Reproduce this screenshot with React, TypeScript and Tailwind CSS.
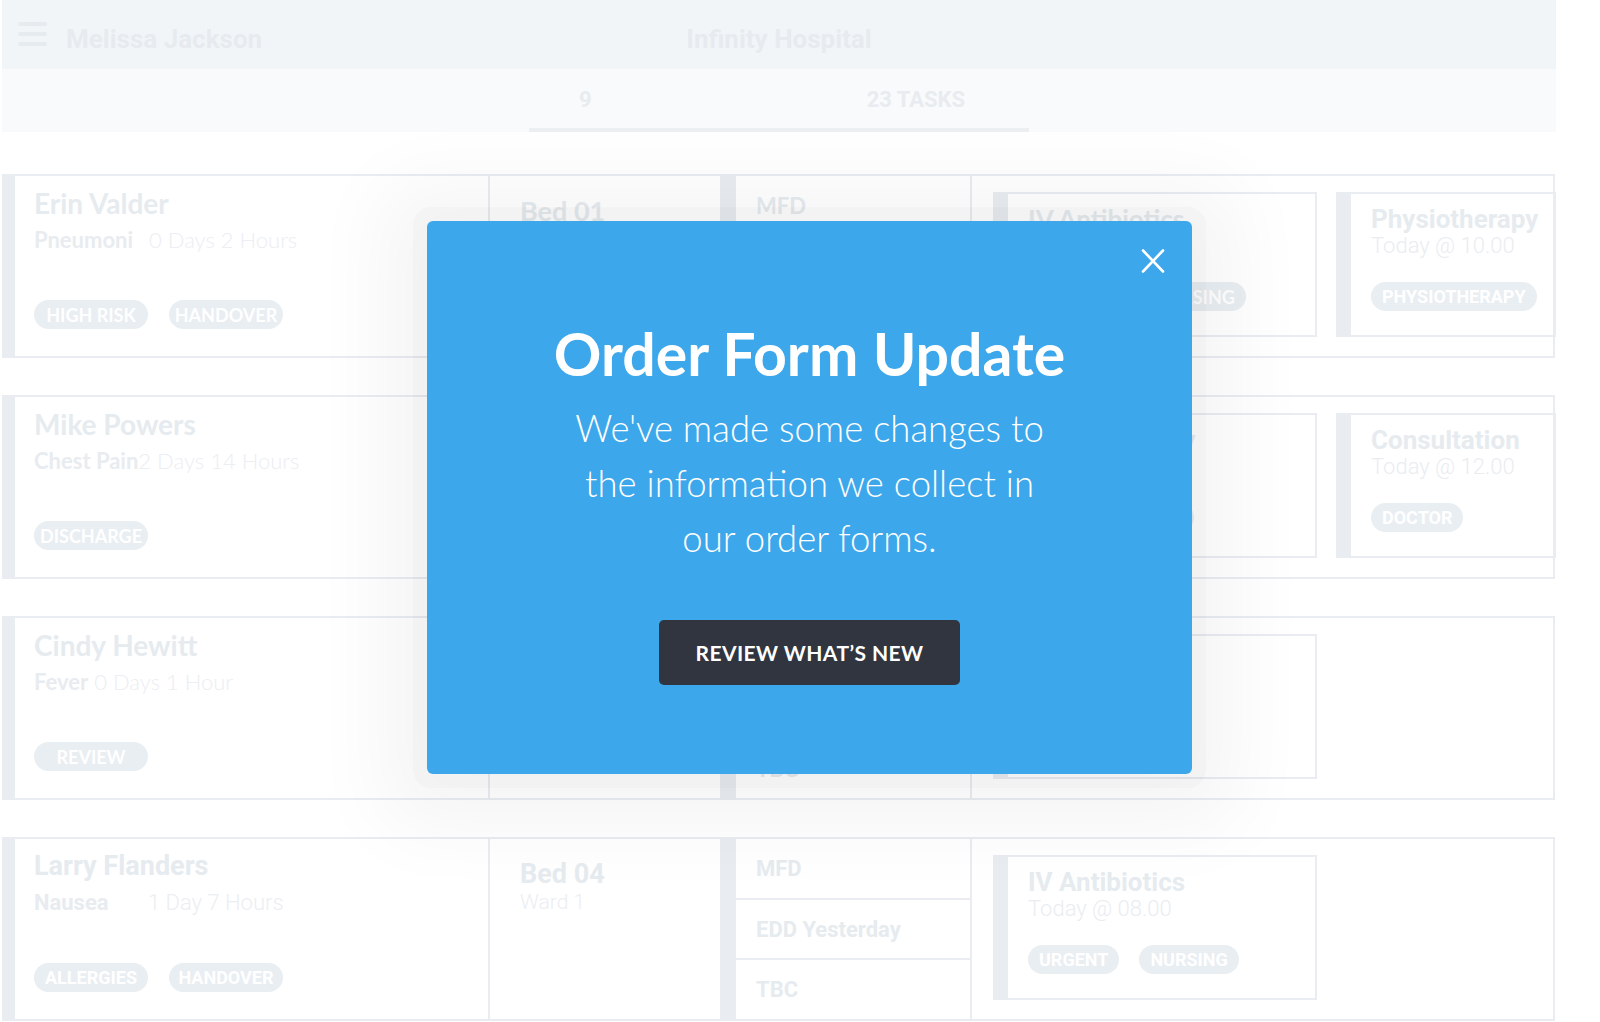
import React from 'react';

const lato = "font-['Lato',sans-serif]";
const roboto = "font-['Roboto',sans-serif]";

type Task = { title: string; time: string; tags: string[]; w: string; narrow: boolean };
type Row = {
  name: string;
  diag: string;
  since: string;
  diagW: string;
  tags: string[];
  bed: string;
  ward: string;
  mfd: string[];
  tasks: Task[];
  narrow: boolean;
};

const rows: Row[] = [
  {
    name: 'Erin Valder',
    diag: 'Pneumoni',
    since: '0 Days 2 Hours',
    diagW: 'w-[115px]',
    tags: ['HIGH RISK', 'HANDOVER'],
    bed: 'Bed 01',
    ward: 'Ward 1',
    mfd: ['MFD', 'EDD Today', 'TBC'],
    narrow: false,
    tasks: [
      { title: 'IV Antibiotics', time: 'Today @ 08.00', tags: ['URGENT', 'NURSING'], w: 'w-[324px]', narrow: false },
      { title: 'Physiotherapy', time: 'Today @ 10.00', tags: ['PHYSIOTHERAPY'], w: 'w-[220px]', narrow: true },
    ],
  },
  {
    name: 'Mike Powers',
    diag: 'Chest Pain',
    since: '2 Days 14 Hours',
    diagW: '',
    tags: ['DISCHARGE'],
    bed: 'Bed 02',
    ward: 'Ward 1',
    mfd: ['MFD', 'EDD Tomorrow', 'TBC'],
    narrow: false,
    tasks: [
      { title: 'Physiotherapy', time: 'Today @ 09.00', tags: ['PHYSIOTHERAPY'], w: 'w-[324px]', narrow: true },
      { title: 'Consultation', time: 'Today @ 12.00', tags: ['DOCTOR'], w: 'w-[220px]', narrow: true },
    ],
  },
  {
    name: 'Cindy Hewitt',
    diag: 'Fever',
    since: '0 Days 1 Hour',
    diagW: 'mr-[6px]',
    tags: ['REVIEW'],
    bed: 'Bed 03',
    ward: 'Ward 1',
    mfd: ['MFD', 'EDD Friday', 'TBC'],
    narrow: false,
    tasks: [{ title: 'Bloods', time: 'Today @ 14.00', tags: ['URGENT'], w: 'w-[324px]', narrow: false }],
  },
  {
    name: 'Larry Flanders',
    diag: 'Nausea',
    since: '1 Day 7 Hours',
    diagW: 'w-[114px]',
    tags: ['ALLERGIES', 'HANDOVER'],
    bed: 'Bed 04',
    ward: 'Ward 1',
    mfd: ['MFD', 'EDD Yesterday', 'TBC'],
    narrow: true,
    tasks: [{ title: 'IV Antibiotics', time: 'Today @ 08.00', tags: ['URGENT', 'NURSING'], w: 'w-[324px]', narrow: true }],
  },
];

function Pill({ label, wide, narrow }: { label: string; wide?: boolean; narrow: boolean }) {
  return (
    <span
      className={`inline-flex h-[29px] items-center justify-center whitespace-nowrap rounded-full bg-[#e9eef2] text-[18px] font-bold leading-none text-white ${
        wide ? 'w-[114px]' : 'px-[11px]'
      } ${narrow ? roboto : lato}`}
    >
      {label}
    </span>
  );
}

function TaskCard({ task }: { task: Task }) {
  const f = task.narrow ? roboto : lato;
  return (
    <div className={`flex h-[145px] shrink-0 flex-col border-2 border-l-[15px] border-[#e9edf1] pl-[20px] pt-[10px] ${task.w}`}>
      <div className={`text-[26px] font-bold leading-[30px] text-[#e6ebef] ${f}`}>{task.title}</div>
      <div className={`text-[22px] font-light leading-[24px] text-[#e9edf1] ${f}`}>{task.time}</div>
      <div className="mt-[24px] flex gap-5">
        {task.tags.map(t => (
          <Pill key={t} label={t} narrow={task.narrow} />
        ))}
      </div>
    </div>
  );
}

function PatientRow({ row }: { row: Row }) {
  const f = row.narrow ? roboto : lato;
  return (
    <div className="flex h-[184px] border-2 border-l-[13px] border-[#e9edf1]">
      <div className={`flex w-[475px] shrink-0 flex-col border-r-2 border-[#e9edf1] pl-[19px] pt-[13px] ${f}`}>
        <div className={`font-bold leading-[28px] text-[#e6ebef] ${row.narrow ? 'text-[27px]' : 'text-[28px]'}`}>{row.name}</div>
        <div className="mt-[12px] flex text-[22px] leading-[22px]">
          <span className={`inline-block font-bold text-[#e8ecf0] ${row.diagW}`}>{row.diag}</span>
          <span className="font-light text-[#ebeef2]">{row.since}</span>
        </div>
        <div className="mt-[49px] flex gap-[21px]">
          {row.tags.map(t => (
            <Pill key={t} label={t} wide narrow={row.narrow} />
          ))}
        </div>
      </div>
      <div className={`w-[230px] shrink-0 pl-[30px] pt-[20px] ${f}`}>
        <div className="text-[27px] font-bold leading-[30px] text-[#e6ebef]">{row.bed}</div>
        <div className="text-[21px] font-light leading-[26px] text-[#ebeef2]">{row.ward}</div>
      </div>
      <div className={`flex w-[252px] shrink-0 flex-col border-l-[16px] border-r-2 border-[#e9edf1] ${f}`}>
        {row.mfd.map((m, i) => (
          <div
            key={m}
            className={`flex flex-1 items-center pl-[20px] text-[22px] font-bold text-[#e6ebef] ${i > 0 ? 'border-t-2 border-[#e9edf1]' : ''}`}
          >
            {m}
          </div>
        ))}
      </div>
      <div className="flex min-w-0 flex-1 gap-[19px] pl-[21px] pt-[16px]">
        {row.tasks.map(t => (
          <TaskCard key={t.title + t.time} task={t} />
        ))}
      </div>
    </div>
  );
}

export default function App() {
  return (
    <div className="relative h-[1022px] w-[1600px] overflow-hidden bg-white">
      <div className="ml-[2px] w-[1554px]">
        <div className={`grid h-[69px] grid-cols-[1fr_auto_1fr] bg-[#f2f5f8] ${roboto}`}>
          <div className="flex items-start">
            <div className="ml-[16px] mt-[22px] flex w-[29px] flex-col gap-[6px]">
              <span className="h-[4px] rounded-full bg-[#e6ebef]" />
              <span className="h-[4px] rounded-full bg-[#e6ebef]" />
              <span className="h-[4px] rounded-full bg-[#e6ebef]" />
            </div>
            <span className="ml-[19px] pt-[26px] text-[26px] font-bold leading-[26px] text-[#e7ebef]">Melissa Jackson</span>
          </div>
          <span className="pt-[26px] text-[26px] font-bold leading-[26px] text-[#e7ebef]">Infinity Hospital</span>
          <div />
        </div>
        <div className={`h-[63px] bg-[#f9fafb] pl-[527px] ${roboto}`}>
          <div className="flex h-[63px] w-[500px] items-start border-b-4 border-[#eceff2] pt-[18px] text-[22px] font-bold leading-[26px] text-[#e8ecf0]">
            <span className="ml-[50px]">9</span>
            <span className="ml-[275px]">23 TASKS</span>
          </div>
        </div>
        <div className="mt-[42px] flex w-[1553px] flex-col gap-[37px]">
          {rows.map(r => (
            <PatientRow key={r.name} row={r} />
          ))}
        </div>
      </div>

      <div className={`absolute left-[427px] top-[221px] flex h-[553px] w-[765px] flex-col items-center rounded-md bg-[#3ca7eb] pt-[103px] text-white shadow-[0_0_0_14px_rgba(0,0,0,0.014),0_8px_80px_45px_rgba(0,0,0,0.045)] ${lato}`}>
        <button className="absolute left-[714px] top-[28px] h-[24px] w-[24px]" aria-label="Close">
          <svg viewBox="0 0 24 24" width="24" height="24" fill="none" stroke="white" strokeWidth="2.6" strokeLinecap="round">
            <path d="M2 1.5 22 22.5M22 1.5 2 22.5" />
          </svg>
        </button>
        <h1 className="text-[59px] font-bold leading-[59px]">Order Form Update</h1>
        <p className="mt-[18px] text-center text-[36.5px] font-light leading-[55px]">
          <span className="block">We've made some changes to</span>
          <span className="block">the information we collect in</span>
          <span className="block">our order forms.</span>
        </p>
        <button className="mt-[54px] h-[65px] w-[301px] rounded-[5px] bg-[#30353f] text-[21px] font-bold tracking-[0.02em] text-white">
          REVIEW WHAT’S NEW
        </button>
      </div>
    </div>
  );
}
